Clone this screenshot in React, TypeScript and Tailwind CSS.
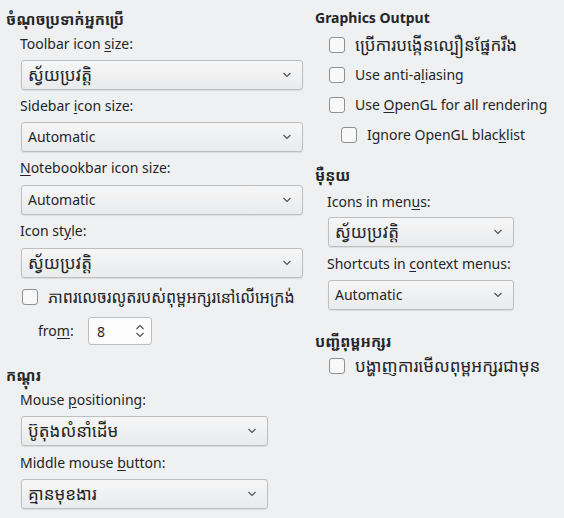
import React from "react";

const font = { fontFamily: '"Noto Sans", "Noto Sans Khmer", "Khmer OS", sans-serif' };

// underline one mnemonic letter
const M = ({ children }: { children: React.ReactNode }) => (
  <span className="underline underline-offset-2">{children}</span>
);

// Khmer runs render larger in the reference
const K = ({ children, size = "text-[17px]" }: { children: React.ReactNode; size?: string }) => (
  <span className={size}>{children}</span>
);

const Chevron = () => (
  <svg width="10" height="6" viewBox="0 0 10 6" className="shrink-0">
    <path d="M1.5 1 L5 4.5 L8.5 1" fill="none" stroke="#4d4f51" strokeWidth="1.1" />
  </svg>
);

const Select = ({ value, width }: { value: React.ReactNode; width: string }) => (
  <div
    className={`${width} h-[30px] ml-px flex items-center justify-between pl-[6px] pr-[10px] rounded-[3px] border border-[#bcbebf] bg-gradient-to-b from-[#f6f6f7] to-[#eaebec] shadow-[0_1px_1px_rgba(0,0,0,0.08)]`}
  >
    <span className="leading-5">{value}</span>
    <Chevron />
  </div>
);

const Label = ({ children, className = "" }: { children: React.ReactNode; className?: string }) => (
  <div className={`h-5 leading-5 ${className}`}>{children}</div>
);

const Check = ({ children, className = "" }: { children: React.ReactNode; className?: string }) => (
  <div className={`h-5 flex items-center gap-[10px] ${className}`}>
    <div className="w-4 h-4 shrink-0 rounded-[3px] border border-[#8e9092] bg-[#f8f8f9]" />
    <span className="leading-5 whitespace-nowrap">{children}</span>
  </div>
);

const Heading = ({ children, className = "" }: { children: React.ReactNode; className?: string }) => (
  <div className={`h-[22px] leading-[22px] font-bold ${className}`}>{children}</div>
);

const AUTO_KM = <K>ស្វ័យប្រវត្តិ</K>;

export default function App() {
  return (
    <div
      style={font}
      className="w-[564px] h-[518px] bg-[#eff0f1] text-[#232629] text-[14px] flex overflow-hidden"
    >
      {/* Left column */}
      <div className="w-[309px] shrink-0 pl-[6px] pt-[8px] flex flex-col">
        <Heading className="text-[15px]">ចំណុចប្រទាក់អ្នកប្រើ</Heading>
        <div className="pl-[14px] flex flex-col">
          <Label className="mt-[4px]">
            Toolbar icon <M>s</M>ize:
          </Label>
          <div className="mt-[6px]">
            <Select value={AUTO_KM} width="w-[282px]" />
          </div>
          <Label className="mt-[6px]">
            Sidebar <M>i</M>con size:
          </Label>
          <div className="mt-[6px]">
            <Select value="Automatic" width="w-[282px]" />
          </div>
          <Label className="mt-[6px]">
            <M>N</M>otebookbar icon size:
          </Label>
          <div className="mt-[7px]">
            <Select value="Automatic" width="w-[282px]" />
          </div>
          <Label className="mt-[6px]">
            Icon st<M>y</M>le:
          </Label>
          <div className="mt-[7px]">
            <Select value={AUTO_KM} width="w-[282px]" />
          </div>
          <Check className="mt-[9px] pl-[2px]">
            <K size="text-[16px]">ភាពរលេចរលូតរបស់ពុម្ពអក្សរនៅលើអេក្រង់</K>
          </Check>
          <div className="mt-[10px] flex items-center pl-[18px]">
            <span className="w-[50px] leading-5">
              fro<M>m</M>:
            </span>
            <div className="w-[64px] h-[28px] flex items-center justify-between pl-[8px] pr-[6px] rounded-[3px] border border-[#bcbebf] bg-[#fcfcfc]">
              <span>8</span>
              <svg width="10" height="16" viewBox="0 0 10 16">
                <path d="M1.5 6 L5 2.5 L8.5 6" fill="none" stroke="#4d4f51" strokeWidth="1.1" />
                <path d="M1.5 10 L5 13.5 L8.5 10" fill="none" stroke="#4d4f51" strokeWidth="1.1" />
              </svg>
            </div>
          </div>
        </div>
        <Heading className="mt-[19px] text-[15px]">កណ្ដុរ</Heading>
        <div className="pl-[14px] flex flex-col">
          <Label className="mt-[4px]">
            Mouse <M>p</M>ositioning:
          </Label>
          <div className="mt-[6px]">
            <Select value={<K>ប៊ូតុងលំនាំដើម</K>} width="w-[247px]" />
          </div>
          <Label className="mt-[7px]">
            Middle mouse <M>b</M>utton:
          </Label>
          <div className="mt-[6px]">
            <Select value={<K>គ្មានមុខងារ</K>} width="w-[247px]" />
          </div>
        </div>
      </div>

      {/* Right column */}
      <div className="flex-1 pl-[6px] pt-[7px] flex flex-col">
        <Heading>Graphics Output</Heading>
        <div className="pl-[14px] flex flex-col">
          <Check className="mt-[6px]">
            <K>ប្រើការបង្កើនល្បឿនផ្នែករឹង</K>
          </Check>
          <Check className="mt-[10px]">
            Use anti-a<M>l</M>iasing
          </Check>
          <Check className="mt-[10px]">
            Use <M>O</M>penGL for all rendering
          </Check>
          <Check className="mt-[10px] pl-[12px]">
            Ignore OpenGL blac<M>k</M>list
          </Check>
        </div>
        <Heading className="mt-[19px] text-[15px]">ម៉ឺនុយ</Heading>
        <div className="pl-[12px] flex flex-col">
          <Label className="mt-[6px]">
            Icons in men<M>u</M>s:
          </Label>
          <div className="mt-[5px]">
            <Select value={AUTO_KM} width="w-[186px]" />
          </div>
          <Label className="mt-[7px]">
            Shortcuts in <M>c</M>ontext menus:
          </Label>
          <div className="mt-[6px]">
            <Select value="Automatic" width="w-[186px]" />
          </div>
        </div>
        <Heading className="mt-[20px] text-[15px]">បញ្ជីពុម្ពអក្សរ</Heading>
        <div className="pl-[14px] flex flex-col">
          <Check className="mt-[4px]">
            <K>បង្ហាញការមើលពុម្ពអក្សរជាមុន</K>
          </Check>
        </div>
      </div>
    </div>
  );
}
